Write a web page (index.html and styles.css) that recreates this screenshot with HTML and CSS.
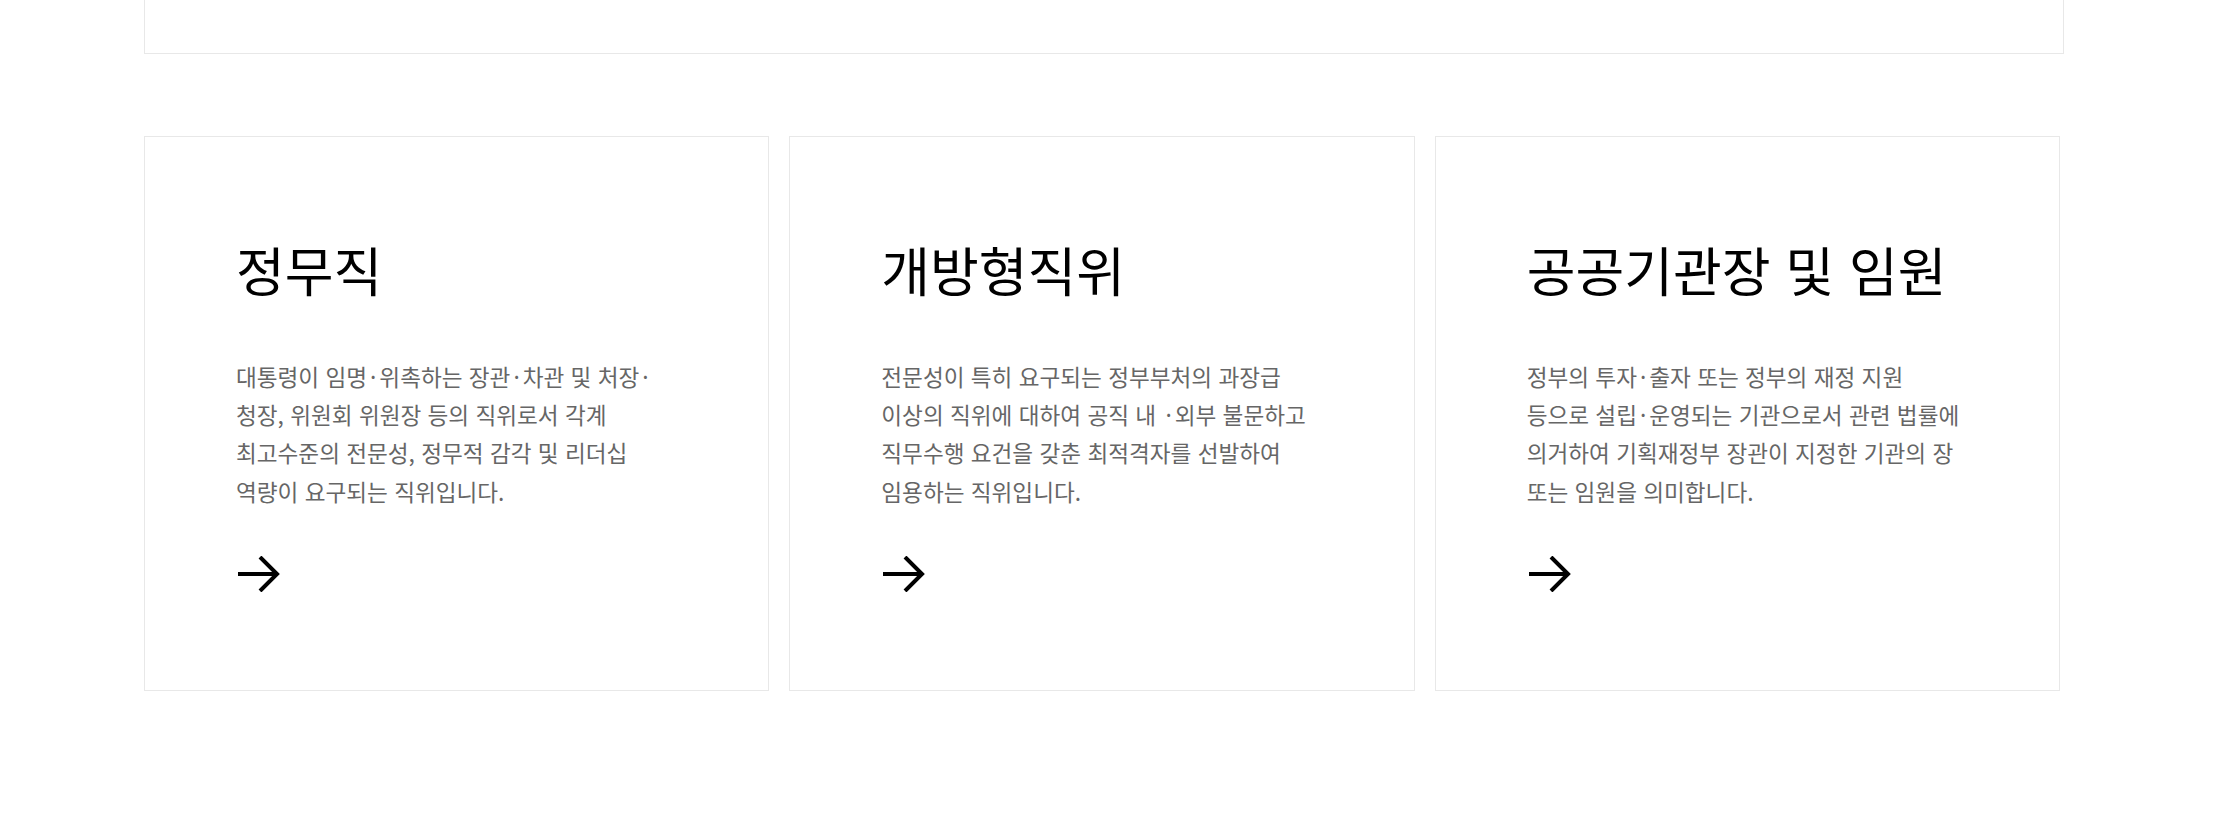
FILE: index.html
```html
<!DOCTYPE html>
<html lang="ko">
<head>
<meta charset="utf-8">
<title>직위 안내</title>
<link rel="stylesheet" href="styles.css">
</head>
<body>
<div class="page">
  <div class="top-box"></div>
  <ul class="cards">
    <li class="card">
      <h3 class="card-title">정무직</h3>
      <p class="card-desc">대통령이 임명<span class="dot">·</span>위촉하는 장관<span class="dot">·</span>차관 및 처장<span class="dot">·</span><br>청장, 위원회 위원장 등의 직위로서 각계<br>최고수준의 전문성, 정무적 감각 및 리더십<br>역량이 요구되는 직위입니다.</p>
      <a class="card-link" href="#" aria-label="정무직 바로가기">
        <svg class="arrow" width="44" height="36" viewBox="0 0 44 36"><path d="M0 18 H40 M22 1 L39 18 L22 35" fill="none" stroke="#000" stroke-width="4"/></svg>
      </a>
    </li>
    <li class="card">
      <h3 class="card-title">개방형직위</h3>
      <p class="card-desc">전문성이 특히 요구되는 정부부처의 과장급<br>이상의 직위에 대하여 공직 내 <span class="dot">·</span>외부 불문하고<br>직무수행 요건을 갖춘 최적격자를 선발하여<br>임용하는 직위입니다.</p>
      <a class="card-link" href="#" aria-label="개방형직위 바로가기">
        <svg class="arrow" width="44" height="36" viewBox="0 0 44 36"><path d="M0 18 H40 M22 1 L39 18 L22 35" fill="none" stroke="#000" stroke-width="4"/></svg>
      </a>
    </li>
    <li class="card">
      <h3 class="card-title">공공기관장 및 임원</h3>
      <p class="card-desc">정부의 투자<span class="dot">·</span>출자 또는 정부의 재정 지원<br>등으로 설립<span class="dot">·</span>운영되는 기관으로서 관련 법률에<br>의거하여 기획재정부 장관이 지정한 기관의 장<br>또는 임원을 의미합니다.</p>
      <a class="card-link" href="#" aria-label="공공기관장 및 임원 바로가기">
        <svg class="arrow" width="44" height="36" viewBox="0 0 44 36"><path d="M0 18 H40 M22 1 L39 18 L22 35" fill="none" stroke="#000" stroke-width="4"/></svg>
      </a>
    </li>
  </ul>
</div>
</body>
</html>
```
FILE: styles.css
```css
html, body {
  margin: 0;
  padding: 0;
  background: #fff;
}

body {
  font-family: "Noto Sans CJK KR", "Noto Sans", sans-serif;
  color: #000;
}

.page {
  margin-left: 144px;
  width: 1920px;
}

.top-box {
  height: 53px;
  border: 1px solid #e8e8e8;
  border-top: 0;
}

.cards {
  list-style: none;
  margin: 82px 0 0;
  padding: 0;
  width: 1916px;
  display: grid;
  grid-template-columns: repeat(3, 1fr);
  gap: 20px;
}

.card {
  border: 1px solid #e8e8e8;
  padding: 101px 40px 99px 91px;
  display: flex;
  flex-direction: column;
  align-items: flex-start;
  box-sizing: border-box;
  height: 555px;
}

.card-title {
  margin: 0;
  font-size: 53px;
  font-weight: 400;
  line-height: 1.2;
  color: #000;
  white-space: nowrap;
}

.card-desc {
  margin: 56px 0 0;
  font-size: 22.6px;
  line-height: 38.4px;
  color: #666;
  white-space: nowrap;
}

.dot {
  margin: 0 3px;
}

.card-link {
  display: block;
  margin-top: 45px;
  margin-left: 2px;
  line-height: 0;
}

.arrow {
  display: block;
}
```
